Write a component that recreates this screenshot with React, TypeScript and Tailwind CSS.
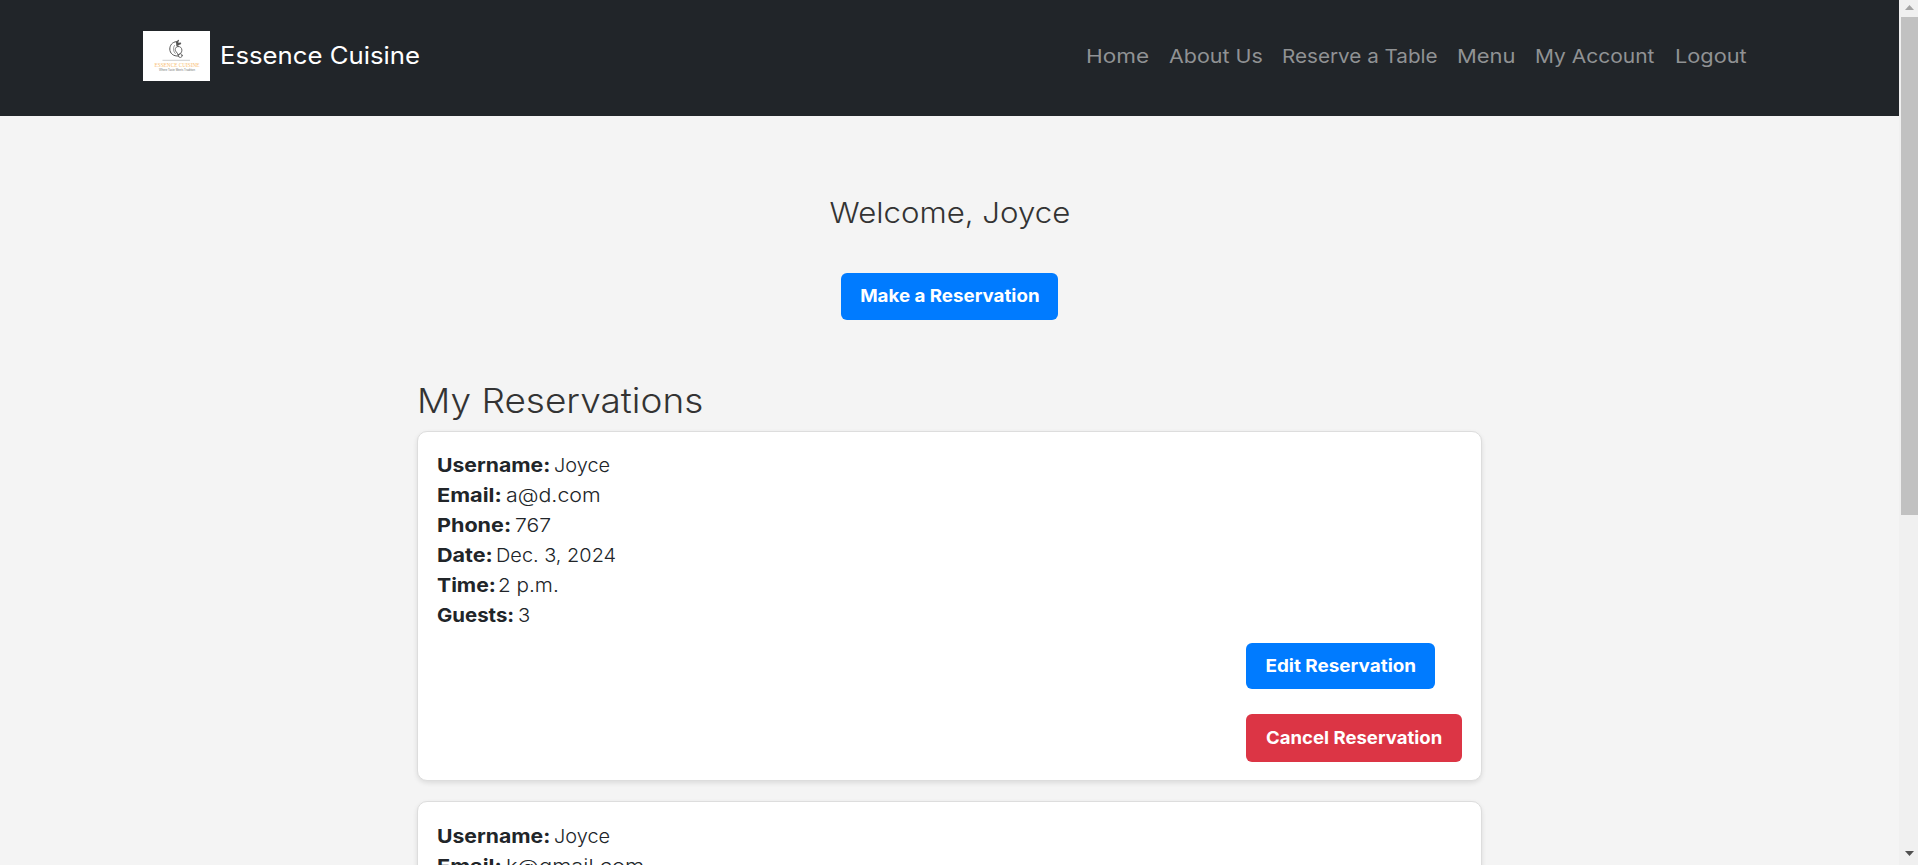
type Field = { label: string; labelBox: string; labelText: string; value: string; valueText: string };

const navItems = [
  { text: "Home", box: "w-[82.5px]", stretch: "scale-x-[1.17]" },
  { text: "About Us", box: "w-[113px]", stretch: "scale-x-[1.115]" },
  { text: "Reserve a Table", box: "w-[175.5px]", stretch: "scale-x-[1.073]" },
  { text: "Menu", box: "w-[78px]", stretch: "scale-x-[1.14]" },
  { text: "My Account", box: "w-[139.5px]", stretch: "scale-x-[1.09]" },
  { text: "Logout", box: "w-[73px]", stretch: "scale-x-[1.13]" },
];

const username: Field = { label: "Username:", labelBox: "w-[117.5px]", labelText: "scale-x-[1.10]", value: "Joyce", valueText: "scale-x-[1.035]" };

const first: Field[] = [
  username,
  { label: "Email:", labelBox: "w-[69px]", labelText: "scale-x-[1.13]", value: "a@d.com", valueText: "scale-x-[1.11]" },
  { label: "Phone:", labelBox: "w-[78px]", labelText: "scale-x-[1.12]", value: "767", valueText: "scale-x-[1.10]" },
  { label: "Date:", labelBox: "w-[59.5px]", labelText: "scale-x-[1.12]", value: "Dec. 3, 2024", valueText: "scale-x-[1.035]" },
  { label: "Time:", labelBox: "w-[61.5px]", labelText: "scale-x-[1.10]", value: "2 p.m.", valueText: "scale-x-[1.075]" },
  { label: "Guests:", labelBox: "w-[81.5px]", labelText: "scale-x-[1.06]", value: "3", valueText: "scale-x-[1.05]" },
];

const second: Field[] = [
  username,
  { label: "Email:", labelBox: "w-[69px]", labelText: "scale-x-[1.13]", value: "k@gmail.com", valueText: "scale-x-[1.14]" },
];

function Logo() {
  return (
    <svg viewBox="0 0 67 50" className="h-[50px] w-[67px] bg-white">
      <g fill="none" stroke="#555555" strokeLinecap="round">
        <path d="M33.500 10.500c-4.500.6-6.700 4-6.700 7.500 0 4.300 3.500 7.500 8.700 7" strokeWidth="1" />
        <path d="M31.500 14.500c-1.700 2.500-1.300 6 .8 8" strokeWidth=".6" />
        <path d="M35 15.500c-3 .4-3.600 3.500-1.800 5.300 1 1 1.500 2 1.800 3.200 2-.8 3.900-2.300 3.900-4.800 0-2.200-1.500-3.900-3.900-3.700Z" strokeWidth=".9" />
        <path d="M34 14.500c-.6-2 .4-4 1.300-5M34.800 14c1-1.200 1.800-1.600 2.700-1.700M33.500 11.500l3.500 1.500" strokeWidth="1.400" />
        <circle cx="37.300" cy="24.600" r="1.900" strokeWidth=".8" />
      </g>
      <path d="M19.500 29.300h27.500" stroke="#c9c9c9" strokeWidth=".9" />
      <text x="11.500" y="35.800" textLength="45" lengthAdjust="spacingAndGlyphs" fontFamily="Liberation Serif, serif" fontSize="6.800" fill="#f9be74">ESSENCE CUISINE</text>
      <text x="16" y="40.200" textLength="36" lengthAdjust="spacingAndGlyphs" fontFamily="Liberation Sans, sans-serif" fontSize="3" fill="#777">Where Taste Meets Tradition</text>
    </svg>
  );
}

function Fields({ items }: { items: Field[] }) {
  return (
    <div className="text-[19.25px] leading-[30px]">
      {items.map((f) => (
        <div key={f.label} className="flex whitespace-nowrap">
          <div className={`${f.labelBox} shrink-0`}>
            <strong className={`inline-block origin-left font-bold ${f.labelText}`}>{f.label}</strong>
          </div>
          <span className={`inline-block origin-left font-light ${f.valueText}`}>{f.value}</span>
        </div>
      ))}
    </div>
  );
}

function Card({ items, className }: { items: Field[]; className: string }) {
  return (
    <section className={`flex h-[350px] flex-col rounded-[10px] border border-[#dddddd] bg-white pl-[18.5px] pr-[19px] shadow-[0_2px_5px_rgba(0,0,0,0.1)] ${className}`}>
      <Fields items={items} />
      <div className="mt-[13px] flex w-[216px] flex-col items-start gap-[25px] self-end text-[17.5px] font-bold text-white">
        <button className="flex h-[46px] w-[189px] items-center justify-center whitespace-nowrap rounded-md bg-[#007bff]">
          <span className="scale-x-[1.08]">Edit Reservation</span>
        </button>
        <button className="flex h-12 w-[216px] items-center justify-center whitespace-nowrap rounded-md bg-[#dc3545]">
          <span className="scale-x-[1.06]">Cancel Reservation</span>
        </button>
      </div>
    </section>
  );
}

export default function App() {
  return (
    <div className="flex h-[865px] overflow-hidden bg-[#f4f4f4] font-['Inter',sans-serif] text-[#212529]">
      <div className="flex w-[1899px] shrink-0 flex-col overflow-hidden">
        <header className="flex h-[116px] shrink-0 items-center justify-between bg-[#212529] pb-1 pl-[143px] pr-[151.5px]">
          <div className="flex items-center gap-[9.500px]">
            <Logo />
            <span className="origin-left scale-x-[1.072] whitespace-nowrap text-2xl text-white">Essence Cuisine</span>
          </div>
          <nav className="flex text-[19.25px] leading-[30px] text-[#909294]">
            {navItems.map((n) => (
              <a key={n.text} className={`${n.box} whitespace-nowrap`}>
                <span className={`inline-block origin-left ${n.stretch}`}>{n.text}</span>
              </a>
            ))}
          </nav>
        </header>
        <main className="flex flex-col">
          <div className="flex flex-col items-center pt-[79px]">
            <h2 className="scale-x-[1.095] whitespace-nowrap text-[28.500px] font-light leading-9 text-[#333]">Welcome, Joyce</h2>
            <button className="mt-[42px] flex h-[47px] w-[217px] items-center justify-center whitespace-nowrap rounded-md bg-[#007bff] text-[17.5px] font-bold text-white">
              <span className="scale-x-[1.07]">Make a Reservation</span>
            </button>
          </div>
          <div className="ml-[417px] mt-[59px] flex w-[1065px] flex-col">
            <h1 className="h-[53px] origin-left scale-x-[1.088] self-start whitespace-nowrap text-[34px] font-light leading-[43px] text-[#333]">My Reservations</h1>
            <Card items={first} className="-mt-px pt-[18px]" />
            <Card items={second} className="mt-5 pt-[19px]" />
          </div>
        </main>
      </div>
      <aside className="flex w-[19px] shrink-0 flex-col items-end justify-between bg-[#f0f0f0]">
        <div className="flex w-[17px] flex-col items-center">
          <svg viewBox="0 0 17 17" className="size-[17px]"><path d="M4 10h9L8.500 5Z" fill="#a3a3a3" /></svg>
          <div className="h-[498px] w-[17px] bg-[#c1c1c1]" />
        </div>
        <svg viewBox="0 0 17 17" className="size-[17px]"><path d="M4 3h9l-4.500 5Z" fill="#505050" /></svg>
      </aside>
    </div>
  );
}
